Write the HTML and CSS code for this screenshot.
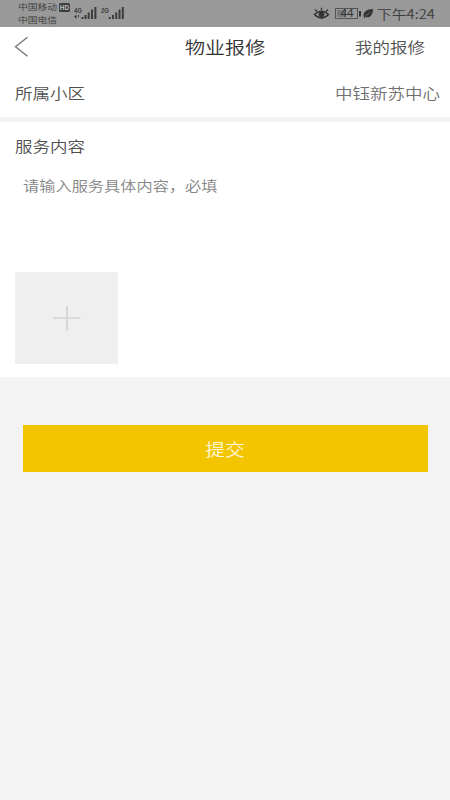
FILE: index.html
```html
<!DOCTYPE html>
<html lang="zh-CN">
<head>
<meta charset="utf-8">
<title>物业报修</title>
<link rel="stylesheet" href="styles.css">
</head>
<body>
<div class="status">
  <div class="carriers"><span class="wide">中国移动</span><span class="wide">中国电信</span></div>
  <span class="hd">HD</span>
  <svg class="signals" width="54" height="27" viewBox="0 0 54 27">
    <g class="net"><text x="1" y="12.5" textLength="8" lengthAdjust="spacingAndGlyphs">4G</text><text x="28" y="12.5" textLength="8" lengthAdjust="spacingAndGlyphs">2G</text></g>
    <path d="M1 16.500l2.500-2V19z" fill="#3d3d3d"/><path d="M5.500 15v2" stroke="#3d3d3d"/>
    <path d="M8.500 17h2v2h-2zM11.500 15h2v4h-2zM14.700 12.500h2V19h-2zM18 9.500h2V19h-2zM21.400 7h2v12h-2zM35.700 17h2v2h-2zM39 15h2v4h-2zM42.200 12.500h2V19h-2zM45.500 9.500h2V19h-2zM48.800 7h2v12h-2z" fill="#3d3d3d"/>
  </svg>
  <svg class="indicators" width="62" height="27" viewBox="0 0 62 27">
    <path d="M1.500 14.500Q8.500 8 15.500 14.500Q8.500 21.500 1.500 14.500Z" fill="none" stroke="#333" stroke-width="1.500"/>
    <circle cx="8.500" cy="14.400" r="2.800" fill="#333"/>
    <path d="M2 9.500l2 2M8.500 7.800v2.500M15 9.500l-2 2" stroke="#333" stroke-width="1.300"/>
    <rect x="22.500" y="8.500" width="22" height="10" fill="none" stroke="#555"/>
    <rect x="24" y="10" width="9" height="7" fill="#7a7a7a"/>
    <rect x="46" y="11" width="2" height="5.500" fill="#333"/>
    <text class="charge" x="27.500" y="17.300" textLength="13" lengthAdjust="spacingAndGlyphs">44</text>
    <path d="M51 17.500C49 12 54 9 60 9C60 15 57 18.500 52.500 17L51 18.500Z" fill="#333"/>
    <path d="M52 16.500L57 12.500" stroke="#888" stroke-width=".6"/>
  </svg>
  <span class="clock wide">下午4:24</span>
</div>
<header class="bar">
  <svg class="back" width="15" height="22" viewBox="0 0 15 22"><path d="M13.500 1.200L1.500 10.700L13.500 20.300" fill="none" stroke="#777" stroke-width="1.400"/></svg>
  <h1 class="title wide">物业报修</h1>
  <span class="mine wide">我的报修</span>
</header>
<div class="community">
  <span class="label wide">所属小区</span>
  <span class="value wide">中钰新苏中心</span>
</div>
<section class="service">
  <div class="label wide">服务内容</div>
  <div class="hint wide">请输入服务具体内容，必填</div>
  <div class="upload"><svg width="28" height="26" viewBox="0 0 28 26"><path d="M0 13h27.500M14 1v24.500" stroke="#d3d3d3" stroke-width="1.700"/></svg></div>
</section>
<div class="submit"><span class="wide">提交</span></div>
</body>
</html>
```
FILE: styles.css
```css
* { box-sizing: border-box; }
body {
  margin: 0;
  width: 450px;
  height: 800px;
  overflow: hidden;
  background: #f3f3f3;
  color: #505050;
  font-family: "Noto Sans CJK SC", sans-serif;
  font-weight: 350;
}
/* Glyphs are drawn wider than they are tall */
.wide {
  display: inline-block;
  white-space: nowrap;
  transform: scaleX(1.167);
  transform-origin: left center;
}
.status {
  display: flex;
  height: 27px;
  background: #999;
  color: #3c3c3c;
}
.carriers {
  display: flex;
  flex-direction: column;
  width: 41px;
  margin-left: 18px;
  font-size: 8.400px;
  line-height: 13px;
}
.hd {
  width: 11px;
  height: 9px;
  margin-top: 3px;
  border-radius: 1.500px;
  background: #3d3d3d;
  color: #bbb;
  font: bold 6.500px/9px "Liberation Sans", sans-serif;
  text-align: center;
}
.signals { margin-left: 3px; }
.net { font: bold 7px "Liberation Sans", sans-serif; fill: #3d3d3d; }
.indicators { margin-left: 186px; }
.charge { font: 10px "Noto Sans", sans-serif; fill: #333; }
.clock {
  margin-left: 2px;
  font-size: 12.700px;
  line-height: 27px;
}
.bar {
  display: grid;
  grid-template-columns: 171px 80px 1fr;
  align-items: center;
  height: 39px;
  padding: 0 25px 0 14px;
  background: #fff;
}
.title {
  margin: 0;
  font-size: 17.200px;
  font-weight: 350;
  line-height: 39px;
  color: #333;
}
.mine {
  justify-self: end;
  transform-origin: right center;
  font-size: 15px;
}
.community {
  display: flex;
  justify-content: space-between;
  align-items: center;
  height: 51px;
  padding: 2px 10px 0 15px;
  background: #fff;
}
.label { font-size: 15px; }
.value {
  transform-origin: right center;
  font-size: 15px;
  color: #707070;
}
.service {
  display: flex;
  flex-direction: column;
  align-items: flex-start;
  height: 255px;
  margin-top: 5px;
  padding: 12px 15px 13px;
  background: #fff;
}
.service .label { line-height: 24px; }
.hint {
  margin: 15px 0 0 8px;
  font-size: 13.900px;
  line-height: 24px;
  color: #858585;
}
.upload {
  display: flex;
  align-items: center;
  justify-content: center;
  width: 103px;
  height: 92px;
  margin-top: auto;
  background: #efefef;
}
.submit {
  display: flex;
  align-items: center;
  justify-content: center;
  height: 47px;
  margin: 48px 22.500px 0;
  background: #f3c500;
  color: #fff8dc;
  font-size: 17px;
}
.submit .wide { transform-origin: center; }
```
